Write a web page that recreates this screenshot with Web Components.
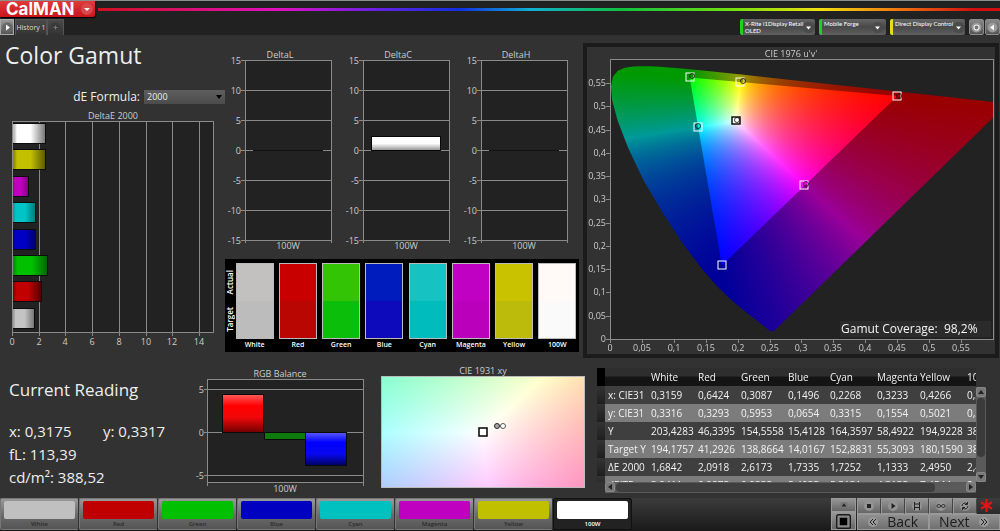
<!DOCTYPE html>
<html lang="en">
<head>
<meta charset="utf-8">
<title>CalMAN - Color Gamut</title>
<style>
html{height:100%}
body{margin:0;min-height:100%;display:flex;background:#323232;color:#eee;font:9px/12px "Open Sans","Noto Sans",sans-serif}
</style>
</head>
<body>
<cal-app></cal-app>
<script>
const define=(name,html,setup)=>{
  const t=document.createElement('template');
  t.innerHTML=html;
  customElements.define(name,class extends HTMLElement{
    constructor(){super();this.attachShadow({mode:'open'})}
    connectedCallback(){
      if(this.shadowRoot.childNodes.length)return;
      this.shadowRoot.append(t.content.cloneNode(true));
      if(setup)setup(this,this.shadowRoot);
    }
  });
};
const chartCss=`svg{display:block;width:100%;height:auto}
text{font:9px "Open Sans","Noto Sans",sans-serif;fill:#ccc}
.m{text-anchor:middle}.e{text-anchor:end}
.grid{stroke:#8a8a8a;stroke-width:1;fill:none;shape-rendering:crispEdges}`;

/* Paints a chromaticity plane: toXYZ maps a pixel to XYZ, level gives its brightness (0 = leave empty). */
const paint=(canvas,toXYZ,level)=>{
  const w=canvas.width,h=canvas.height,c=canvas.getContext('2d'),img=c.createImageData(w,h);
  for(let j=0;j<h;j++)for(let i=0;i<w;i++){
    const [X,Y,Z]=toXYZ(i+.5,j+.5);
    const l=level(i+.5,j+.5);
    if(!l)continue;
    const rgb=[3.2406*X-1.5372*Y-.4986*Z,-.9689*X+1.8758*Y+.0415*Z,.0557*X-.204*Y+1.057*Z].map(v=>Math.max(0,v));
    const m=Math.max(...rgb)||1,o=(j*w+i)*4;
    for(let k=0;k<3;k++)img.data[o+k]=255*l*rgb[k]/m;
    img.data[o+3]=255;
  }
  c.putImageData(img,0,0);
};

define('cal-logo',`<style>
:host{display:block}
button{all:unset;box-sizing:border-box;display:flex;align-items:center;gap:6px;height:16px;width:95px;padding-left:6px;border-radius:0 0 2px 0;background:linear-gradient(#e0393b,#c9151b);color:#fff;font:700 17px/15px Inter,sans-serif;box-shadow:1px 1px 1px #000}
svg{width:12px;height:12px}
</style><button type="button" aria-label="CalMAN menu"><span>CalMAN</span><svg viewBox="0 0 12 12"><circle cx="6" cy="6" r="6" fill="#d6484a"/><path d="M3 5h6L6 8z" fill="#fff"/></svg></button>`);

define('device-menu',`<style>
:host{display:block}
button{all:unset;box-sizing:border-box;display:flex;justify-content:space-between;width:100%;height:16px;padding:1px 3px 0 2px;border-left:3px solid var(--mark);border-radius:2px;background:linear-gradient(#666,#484848 50%,#606060);font:6px/7px Lato,sans-serif;color:#fff;align-items:flex-start;white-space:nowrap}
svg{width:11px;height:11px;margin-top:2px;flex:none}
</style><button type="button"><span><slot></slot></span><svg viewBox="0 0 11 11"><circle cx="5.500" cy="5.500" r="5.500" fill="#4b4b4b"/><path d="M3 4.500h5L5.500 7.500z" fill="#fff"/></svg></button>`);

define('cal-header',`<style>
:host{display:block;background:#212121;border-top:1px solid #8a908c}
.top,.bar,.tabs,.dev{display:flex}
.top{height:16px;align-items:center;gap:3px}
.line{flex:1;height:3px;background:linear-gradient(90deg,#d01020,#e010c0 20%,#7020e0 30%,#1030e0 40%,#10b0d0 48%,#10c040 58%,#70e010 70%,#f0e010 80%,#f08010 88%,#d01010 97%)}
.bar{height:18px;justify-content:space-between;align-items:flex-end}
button{all:unset;box-sizing:border-box;display:flex;align-items:center;justify-content:center}
.play{width:14px;height:16px;border:1px solid #aaa;background:linear-gradient(#999,#555)}
.tab{height:16px;font:7px/14px "Open Sans","Noto Sans",sans-serif;color:#ddd;background:linear-gradient(#4a4a4a,#333);border:1px solid #555;border-bottom:0}
.h{width:32px;margin-left:1px}.p{width:17px}
.dev{gap:4px}
.sq{width:15px;height:16px;border-radius:2px;background:linear-gradient(#888,#555);border:1px solid #8a8a8a}
.pair{display:flex;gap:1px}
svg{width:11px;height:11px}
</style>
<div class="top"><cal-logo></cal-logo><div class="line"></div></div>
<div class="bar">
<div class="tabs"><button class="play" type="button" aria-label="Expand"><svg viewBox="0 0 11 11"><circle cx="5.500" cy="5.500" r="5" fill="#666"/><path d="M4 2.500v6l4-3z" fill="#fff"/></svg></button>
<button class="tab h" type="button">History 1</button><button class="tab p" type="button" aria-label="Add tab"><svg viewBox="0 0 11 11"><circle cx="5.500" cy="5.500" r="5" fill="#3a3a3a"/><path d="M5.500 3.500v4M3.500 5.500h4" stroke="#777"/></svg></button></div>
<div class="dev">
<device-menu style="width:75px;--mark:#1fd01f">X-Rite i1Display Retail<br>OLED</device-menu>
<device-menu style="width:67px;--mark:#1fd01f">Mobile Forge</device-menu>
<device-menu style="width:75px;--mark:#e6dc1e">Direct Display Control</device-menu>
<div class="pair"><button class="sq" type="button" aria-label="Settings"><svg viewBox="0 0 11 11"><circle cx="5.500" cy="5.500" r="5" fill="#999"/><circle cx="5.500" cy="5.500" r="2.500" fill="#777" stroke="#eee" stroke-width="1.200"/></svg></button><button class="sq" type="button" aria-label="Collapse"><svg viewBox="0 0 11 11"><circle cx="5.500" cy="5.500" r="5" fill="#999"/><path d="M7 2.500v6l-4-3z" fill="#fff"/></svg></button></div>
</div></div>`);

define('formula-picker',`<style>
:host{display:flex;justify-content:flex-end;align-items:center;gap:4px;font-size:12px;line-height:16px}
.w{display:grid;width:81px;align-items:center}
select{grid-area:1/1;appearance:none;margin:0;width:100%;height:14px;padding:0 3px;border:0;border-radius:0;background:linear-gradient(#5e5e5e,#4c4c4c);color:#eee;font:9px/14px "Open Sans","Noto Sans",sans-serif}
svg{grid-area:1/1;width:6px;height:4px;justify-self:end;margin-right:3px;pointer-events:none}
</style><label for="f">dE Formula:</label><div class="w"><select id="f"><option>2000</option><option>1976</option></select><svg viewBox="0 0 6 4"><path d="M0 0h6L3 4z"/></svg></div>`);

define('delta-e-chart',`<style>:host{display:block}${chartCss}</style><svg viewBox="0 0 225 242" role="img" aria-label="DeltaE 2000"></svg>`,(el,root)=>{
  const bars=[[45,'#ffffff','#777'],[45,'#c2c000','#5c5a00'],[28,'#c000c0','#800080'],[35,'#00c4c6','#007c7e'],[35,'#0000c4','#000070'],[47,'#00c000','#006a00'],[41,'#c20000','#560000'],[34,'#c4c4c4','#777']];
  let d='',g='',s=`<rect x="12" y="11" width="201" height="211" fill="#222"/>`;
  for(let i=0;i<8;i++){const x=12+Math.round(i*26.7);d+=`M${x}.5 11V226`;s+=`<text class="m" x="${x}" y="235">${i*2}</text>`}
  s+=`<path class="grid" d="${d}M12 11.500H213.500V222.500H12"/><text class="m" x="113" y="9">DeltaE 2000</text>`;
  bars.forEach(([x,c,k],i)=>{
    g+=`<linearGradient id="g${i}"><stop stop-color="${k}" stop-opacity=".5"/><stop offset=".12" stop-color="${c}"/><stop offset=".55" stop-color="${c}"/><stop offset="1" stop-color="${k}"/></linearGradient>`;
    const y=13+Math.round(i*26.4);
    s+=`<rect x="13" y="${y}" width="${x-12}" height="21" fill="#0c0c0c"/><rect x="13" y="${y+1}" width="${x-13}" height="19" fill="${c}"/><rect x="13" y="${y+1}" width="${x-13}" height="19" fill="url(#g${i})"/>`;
  });
  root.querySelector('svg').innerHTML=`<defs>${g}</defs>`+s;
});

define('delta-chart',`<style>:host{display:block}${chartCss}</style><svg viewBox="0 0 118 205" role="img"></svg>`,(el,root)=>{
  const v=+el.getAttribute('value');
  let d='',s='<rect x="20" y="13" width="87" height="180" fill="#222"/>';
  for(let i=0;i<7;i++){const y=13+i*30;d+=`M16 ${y}.5H107`;s+=`<text class="e" x="16" y="${y+4}">${15-5*i}</text>`}
  s+=`<path class="grid" d="${d}M20.500 13V196M106.500 13V196"/><text class="m" x="55" y="11">${el.getAttribute('name')}</text><text class="m" x="63" y="202">100W</text>`;
  s+=v?`<linearGradient id="b" x2="0" y2="1"><stop offset=".5" stop-color="#fff"/><stop offset="1" stop-color="#999"/></linearGradient><rect x="28" y="89" width="70" height="15" fill="#080808"/><rect x="29" y="90" width="68" height="13" fill="url(#b)"/>`:'<rect x="28" y="103" width="70" height="1" fill="#111"/>';
  root.querySelector('svg').innerHTML=s;
});

define('swatch-panel',`<style>
:host{display:grid;grid-template-columns:8px repeat(8,1fr);background:#000;color:#fff;padding:4px 0 2px;font-size:7px;font-weight:600}
.side{display:flex;flex-direction:column;justify-content:space-around;align-items:center;height:76px;font-size:8px;line-height:10px;margin:0 -2px 0 0}
.side span{writing-mode:vertical-rl;transform:rotate(180deg)}
figure{margin:0;display:flex;flex-direction:column;align-items:center}
.c{box-sizing:border-box;width:38px;height:76px;border:1px solid #bbb}
figcaption{line-height:11px}
</style><div class="side"><span>Actual</span><span>Target</span></div>`,(el,root)=>{
  [['White','#c2c1c0','#bcbcbc'],['Red','#c80000','#b90602'],['Green','#32c405','#0abe0a'],['Blue','#001cbc','#0c0abb'],['Cyan','#16c2c2','#00bcbc'],['Magenta','#c000c2','#bb00bc'],['Yellow','#c8c200','#bcbb0c'],['100W','#fff9f7','#fafafa']].forEach(([n,a,b])=>{
    root.innerHTML+=`<figure><div class="c" style="background:linear-gradient(${a} 50%,${b} 50%)"></div><figcaption>${n}</figcaption></figure>`;
  });
});

define('uv-chart',`<style>
:host{display:grid;border:4px solid #1b1b1b;background:#323232}
canvas,svg{grid-area:1/1}canvas{width:100%;height:auto}${chartCss}
text.big{font-size:12px;fill:#f4f4f4}
</style><canvas width="408" height="307"></canvas><svg viewBox="0 0 408 307" role="img" aria-label="CIE 1976 chart"></svg>`,(el,root)=>{
  const locus=[.1741,.005,.1714,.0051,.1689,.0069,.1644,.0109,.1566,.0177,.151,.0227,.144,.0297,.1355,.0399,.1241,.0578,.1096,.0868,.0913,.1327,.0687,.2007,.0454,.295,.0235,.4127,.0082,.5384,.0039,.6548,.0139,.7502,.0389,.812,.0743,.8338,.1142,.8262,.1547,.8059,.1929,.7816,.2296,.7543,.3016,.6923,.3731,.6245,.4441,.5547,.5125,.4866,.5752,.4242,.627,.3725,.6658,.334,.6915,.3083,.719,.2809,.7347,.2653];
  const px=(u,v)=>[23+u*637.6,292-v*464.9];
  const shape=new Path2D(),tri=new Path2D();
  for(let i=0;i<locus.length;i+=2){const x=locus[i],y=locus[i+1],q=-2*x+12*y+3;shape.lineTo(...px(4*x/q,9*y/q))}
  shape.closePath();
  [[.4507,.5229],[.125,.5625],[.1754,.1579]].forEach(p=>tri.lineTo(...px(...p)));
  tri.closePath();
  const cv=root.querySelector('canvas'),c=cv.getContext('2d'),off=document.createElement('canvas');
  off.width=408;off.height=307;
  const xyz=(i,j)=>{const u=(i-23)/637.6,v=Math.max(.001,(292-j)/464.9);return[9*u/(4*v),1,(12-3*u-20*v)/(4*v)]};
  c.fillStyle='#222';c.fillRect(23,13,383,279);
  c.save();c.beginPath();c.rect(23,13,383,279);c.clip();
  paint(off,xyz,()=>.6);c.save();c.clip(shape);c.drawImage(off,0,0);c.restore();
  paint(off,xyz,()=>1);c.clip(tri);c.drawImage(off,0,0);c.restore();
  let s='',d='';
  for(let i=0;i<12;i++){
    const n=String(i*5/100).replace('.',','),x=23+Math.round(i*31.9),y=292-Math.round(i*23.25);
    d+=`M${x}.5 292V296M19 ${y}.5H23`;
    s+=`<text class="m" x="${x}" y="304">${n}</text><text class="e" x="19" y="${y+3}">${n}</text>`;
  }
  s+=`<path class="grid" d="M23.500 12.500H406.500V292.500H23.500Z${d}"/><text class="m" x="204" y="10">CIE 1976 u'v'</text>`;
  [[103,30],[153,35],[310,49],[111,80],[217,138],[135,218]].forEach(([x,y])=>s+=`<rect x="${x-4}" y="${y-4}" width="8" height="8" fill="none" stroke="#fff"/>`);
  s+='<rect x="145" y="70" width="8" height="7" fill="#fff" stroke="#000" stroke-width="1.400"/>';
  [[105,29],[156,34],[312,49],[111,79],[219,137],[150,73]].forEach(([x,y])=>s+=`<circle cx="${x}" cy="${y}" r="2.500" fill="none" stroke="#111" stroke-opacity=".8"/>`);
  s+='<rect x="253" y="274" width="151" height="16" fill="#2b2b2b"/><text class="big" x="254" y="286" xml:space="preserve">Gamut Coverage:  98,2%</text>';
  root.querySelector('svg').innerHTML=s;
});

define('current-reading',`<style>
:host{display:block;padding:20px 0 0 9px;font-size:15px;line-height:23px;white-space:nowrap}
h2{margin:0 0 18px;font-size:17px;line-height:24px;font-weight:400}
p{margin:0;display:grid;grid-template-columns:94px auto}
</style><h2>Current Reading</h2><p><span>x: 0,3175</span><span>y: 0,3317</span></p><p>fL: 113,39</p><p>cd/m²: 388,52</p>`);

define('rgb-balance',`<style>:host{display:block}${chartCss}</style><svg viewBox="0 0 186 140" role="img" aria-label="RGB Balance">
<defs><linearGradient id="r" x2="0" y2="1"><stop stop-color="#ff5a5a"/><stop offset=".3" stop-color="#f00"/><stop offset=".6" stop-color="#f00808"/><stop offset="1" stop-color="#700000"/></linearGradient>
<linearGradient id="b" x2="0" y2="1"><stop stop-color="#5a5aff"/><stop offset=".3" stop-color="#00f"/><stop offset=".65" stop-color="#0808f0"/><stop offset="1" stop-color="#000060"/></linearGradient></defs>
<rect x="17" y="22" width="156" height="103" fill="#222"/>
<path class="grid" d="M14 31.500H173M14 74.500H173M14 117.500H173M17 21.500H173.500V128M17.500 21V128M17 124.500H173"/>
<g stroke="#0a0a0a"><rect x="32.500" y="36.500" width="41" height="38" fill="url(#r)"/><rect x="74.500" y="74.500" width="41" height="7" fill="#0c7a0c"/><rect x="115.500" y="74.500" width="41" height="33" fill="url(#b)"/></g>
<text class="m" x="90" y="19">RGB Balance</text><text class="m" x="95" y="134">100W</text>
<text class="e" x="14" y="35">5</text><text class="e" x="14" y="78">0</text><text class="e" x="14" y="121">-5</text></svg>`);

define('xy-chart',`<style>
:host{display:flex;flex-direction:column;align-items:center;padding:7px 7px 0 5px;color:#ccc}
h3{margin:0;font-size:9px;line-height:11px;font-weight:400}
.p{display:grid;width:100%}
canvas,svg{grid-area:1/1;display:block;width:100%;height:auto}
</style><h3>CIE 1931 xy</h3><div class="p"><canvas width="204" height="112"></canvas>
<svg viewBox="0 0 204 112"><rect x=".5" y=".5" width="203" height="111" fill="none" stroke="#bbb"/><rect x="98" y="52" width="8" height="8" fill="#fff" stroke="#000" stroke-width="1.500"/><circle cx="116" cy="50" r="2.500" fill="#aaa" stroke="#222"/><circle cx="122" cy="50" r="2.500" fill="#fff" stroke="#555"/></svg></div>`,(el,root)=>{
  paint(root.querySelector('canvas'),(i,j)=>{const x=.3127+(i-102)/4167,y=.329-(j-56)/2300;return[x/y,1,(1-x-y)/y]},()=>1);
});

define('data-grid',`<style>
:host{display:block;padding:10px 14px 0 5px}
.g{display:grid;grid-template-columns:minmax(0,1fr) 10px;grid-template-rows:114px 11px}
.v{overflow:hidden}
table{table-layout:fixed;width:414px;border-collapse:collapse;font-size:10px;line-height:18px;color:#f2f2f2}
th,td{padding:0 0 0 3px;height:18px;text-align:left;font-weight:400;white-space:nowrap}
thead th{background:linear-gradient(#2e2e2e 45%,#141414 50%)}
thead th:first-child{background:#000}
tbody tr{background:#3f3f3f}tbody tr:nth-child(even){background:#7c7c7c}
tbody td:first-child{background:linear-gradient(#333,#1f1f1f)}
.y{margin-top:19px;background:#5a5a5a;display:flex;flex-direction:column;justify-content:space-between}
.x{margin-left:8px;background:#5a5a5a;display:flex;justify-content:space-between}
button{all:unset;box-sizing:border-box;display:flex;align-items:center;justify-content:center;width:10px;height:10px;background:#777;border:1px solid #888;border-radius:2px}
.y i{flex:1;margin:1px 1px 15px;border-radius:4px;background:#3b3b3b}
.x i{flex:1;margin:1px 31px 1px 1px;border-radius:4px;background:#3f3f3f}
svg{width:6px;height:6px;fill:#222}
</style><div class="g"><div class="v"><table><colgroup><col style="width:8px"><col style="width:43px"><col style="width:47px"><col style="width:43px"><col style="width:47px"><col style="width:42px"><col style="width:47px"><col style="width:43px"><col style="width:47px"><col style="width:47px"></colgroup><thead></thead><tbody></tbody></table></div>
<div class="y"><button type="button" aria-label="Scroll up"><svg viewBox="0 0 6 6"><path d="M0 5h6L3 1z"/></svg></button><i></i><button type="button" aria-label="Scroll down"><svg viewBox="0 0 6 6"><path d="M0 1h6L3 5z"/></svg></button></div>
<div class="x"><button type="button" aria-label="Scroll left"><svg viewBox="0 0 6 6"><path d="M5 0v6L1 3z"/></svg></button><i></i><button type="button" aria-label="Scroll right"><svg viewBox="0 0 6 6"><path d="M1 0v6l4-3z"/></svg></button></div></div>`,(el,root)=>{
  const row=(t,s)=>'<tr>'+s.split('|').map(c=>`<${t}>${c}</${t}>`).join('')+'</tr>';
  root.querySelector('thead').innerHTML=row('th','||White|Red|Green|Blue|Cyan|Magenta|Yellow|100W');
  root.querySelector('tbody').innerHTML=['|x: CIE31|0,3159|0,6424|0,3087|0,1496|0,2268|0,3233|0,4266|0,3175','|y: CIE31|0,3316|0,3293|0,5953|0,0654|0,3315|0,1554|0,5021|0,3317','|Y|203,4283|46,3395|154,5558|15,4128|164,3597|58,4922|194,9228|388,52','|Target Y|194,1757|41,2926|138,8664|14,0167|152,8831|55,3093|180,1590|388,52','|ΔE 2000|1,6842|2,0918|2,6173|1,7335|1,7252|1,1333|2,4950|2,4512','|dEITP|3,9411|0,9875|0,9335|5,4035|5,5131|4,3135|7,4544|2,9100'].map(r=>row('td',r)).join('');
});

define('pattern-button',`<style>
:host{display:block;flex:0 1 79px}
button{all:unset;box-sizing:border-box;display:flex;flex-direction:column;width:100%;height:32px;padding:2px 3px 0;border:1px solid #777;border-right-color:#333;border-radius:2px;background:linear-gradient(#999,#6a6a6a 55%,#555);text-align:center;font:600 6px/10px "Open Sans","Noto Sans",sans-serif;color:#2c2c2c}
.c{height:19px;border-radius:2px;background:var(--c)}
:host([selected]) button{background:#222;border-color:#111;color:#fff}
</style><button type="button"><span class="c"></span><slot></slot></button>`);

define('transport-controls',`<style>
:host{display:grid;grid-template-columns:25px 143px;gap:1px;font-size:14px;color:#1c1c1c}
button{all:unset;box-sizing:border-box;display:flex;align-items:center;justify-content:center;height:15px;border:1px solid #999;background:linear-gradient(#969696,#666);flex:1}
.a,.b{display:flex;flex-direction:column}
.a button{flex:none}.a .s{height:18px}.a .t{height:14px}
.i,.n{display:flex}.i button{border-right-color:#444;flex:0 0 24px;height:16px}
.n button{gap:8px;height:16px;line-height:16px;background:linear-gradient(#8f8f8f,#707070)}
svg{width:12px;height:12px;flex:none}
.ast{width:13px;height:15px;margin-left:3px}
</style>
<div class="a"><button class="t" type="button" aria-label="Expand controls"><svg viewBox="0 0 12 12"><ellipse cx="6" cy="6" rx="4" ry="3" fill="#777"/><path d="M3.500 7.500h5L6 4.500z" fill="#222"/></svg></button>
<button class="s" type="button" aria-label="Pattern window"><svg viewBox="0 0 16 16" style="width:15px;height:15px"><rect x=".75" y=".75" width="14.500" height="14.500" rx="2" fill="#888" stroke="#1b1b1b" stroke-width="1.500"/><rect x="4" y="4" width="8" height="8" fill="#000"/></svg></button></div>
<div class="b"><div class="i">
<button type="button" aria-label="Stop"><svg viewBox="0 0 12 12"><circle cx="6" cy="6" r="5" fill="#949494"/><path d="M4 4h4v4H4z" fill="#222"/></svg></button>
<button type="button" aria-label="Play"><svg viewBox="0 0 12 12"><circle cx="6" cy="6" r="5" fill="#949494"/><path d="M4.500 3v6l4-3z" fill="#222"/></svg></button>
<button type="button" aria-label="Read series"><svg viewBox="0 0 12 12"><circle cx="6" cy="6" r="5" fill="#949494"/><path d="M3.500 2v8M8.500 2v8M4 4h4M4 7.500h4" stroke="#222" fill="none"/></svg></button>
<button type="button" aria-label="Continuous"><svg viewBox="0 0 12 12"><circle cx="6" cy="6" r="5" fill="#949494"/><path d="M6 6C4.500 4 2 4 2 6s2.500 2 4 0 4-2 4 0-2.500 2-4 0z" stroke="#222" fill="none"/></svg></button>
<button type="button" aria-label="Refresh"><svg viewBox="0 0 12 12"><circle cx="6" cy="6" r="5" fill="#949494"/><path d="M3 6a3 3 0 0 1 5-2.200M9 6a3 3 0 0 1-5 2.200M8.500 2v2.500H6M3.500 10V7.500H6" stroke="#222" fill="none"/></svg></button>
<svg class="ast" viewBox="0 0 14 14"><path d="M7 0v14M1 3.500l12 7M13 3.500l-12 7" stroke="#e01414" stroke-width="2.400"/></svg></div>
<div class="n"><button type="button"><svg viewBox="0 0 12 12"><circle cx="6" cy="6" r="5" fill="#999"/><path d="M6 3L3 6l3 3M9 3L6 6l3 3" stroke="#222" fill="none"/></svg>Back</button><button type="button">Next<svg viewBox="0 0 12 12"><circle cx="6" cy="6" r="5" fill="#999"/><path d="M3 3l3 3-3 3M6 3l3 3-3 3" stroke="#222" fill="none"/></svg></button></div></div>`);

define('pattern-bar',`<style>
:host{display:flex;height:33px;background:linear-gradient(#3c3c3c,#191919)}
transport-controls{margin-left:auto}
</style>
<pattern-button style="--c:#c0c0c0">White</pattern-button><pattern-button style="--c:#c00000">Red</pattern-button><pattern-button style="--c:#00c000">Green</pattern-button><pattern-button style="--c:#0000c0">Blue</pattern-button><pattern-button style="--c:#00c0c0">Cyan</pattern-button><pattern-button style="--c:#c000c0">Magenta</pattern-button><pattern-button style="--c:#c0c000">Yellow</pattern-button><pattern-button selected style="--c:#fff">100W</pattern-button>
<transport-controls></transport-controls>`);

define('cal-app',`<style>
:host{display:flex;flex-direction:column;flex:1;min-width:0}
main{flex:1}
.top{display:grid;grid-template-columns:225fr 358fr 417fr;align-items:start}
h1{margin:5px 0 19px 5px;font-size:23px;line-height:30px;font-weight:400}
formula-picker{margin-bottom:5px}
.mid{padding:12px 4px 0 0}
.charts{display:grid;grid-template-columns:repeat(3,1fr);margin-bottom:7px}
uv-chart{margin:8px 1px 0 0}
.low{display:grid;grid-template-columns:190fr 186fr 216fr 408fr;align-items:start}
</style>
<cal-header></cal-header>
<main>
<div class="top">
<section><h1>Color Gamut</h1><formula-picker></formula-picker><delta-e-chart></delta-e-chart></section>
<section class="mid"><div class="charts"><delta-chart name="DeltaL" value="0"></delta-chart><delta-chart name="DeltaC" value="2"></delta-chart><delta-chart name="DeltaH" value="0"></delta-chart></div><swatch-panel></swatch-panel></section>
<uv-chart></uv-chart>
</div>
<div class="low"><current-reading></current-reading><rgb-balance></rgb-balance><xy-chart></xy-chart><data-grid></data-grid></div>
</main>
<pattern-bar></pattern-bar>`);
</script>
</body>
</html>
